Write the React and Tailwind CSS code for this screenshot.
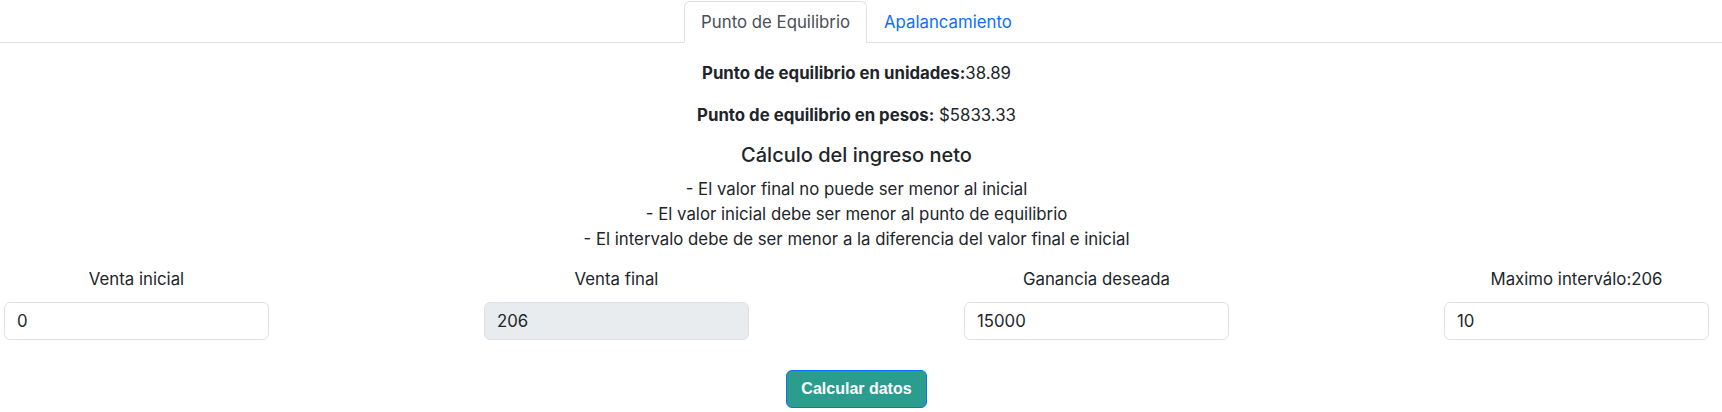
import { useState } from "react";

const bullets = [
  "- El valor final no puede ser menor al inicial",
  "- El valor inicial debe ser menor al punto de equilibrio",
  "- El intervalo debe de ser menor a la diferencia del valor final e inicial",
];

function Field({ label, value, onChange, disabled }) {
  return (
    <div className="flex w-[265px] flex-col items-center">
      <label className="mb-[11px] text-[16.8px] leading-6">{label}</label>
      <input
        type="text"
        value={value}
        disabled={disabled}
        onChange={(e) => onChange && onChange(e.target.value)}
        className={`h-[38px] w-full rounded-[6px] border border-[#dee2e6] px-3 text-[16.8px] text-[#212529] outline-none ${
          disabled ? "bg-[#e9ecef]" : "bg-white"
        }`}
      />
    </div>
  );
}

export default function App() {
  const [tab, setTab] = useState("equilibrio");
  const [inicial, setInicial] = useState("0");
  const [ganancia, setGanancia] = useState("15000");
  const [intervalo, setIntervalo] = useState("10");

  return (
    <div className="min-h-[412px] bg-white font-['Inter','Noto_Sans',sans-serif] text-[#212529]">
      {/* Tabs */}
      <div className="flex justify-center border-b border-[#dee2e6] pr-[9px] pt-px">
        <button
          onClick={() => setTab("equilibrio")}
          className="-mb-px rounded-t-[6px] border border-[#dee2e6] border-b-white bg-white px-4 py-2 text-[16.8px] leading-6 text-[#495057]"
        >
          Punto de Equilibrio
        </button>
        <button
          onClick={() => setTab("apalancamiento")}
          className="-mb-px border border-transparent px-4 py-2 text-[16.8px] leading-6 text-[#0d6efd]"
        >
          Apalancamiento
        </button>
      </div>

      {/* Content */}
      <div className="flex flex-col items-center pr-[9px] pt-[18px]">
        <p className="mb-[18px] text-[16.8px] leading-6">
          <span className="font-bold">Punto de equilibrio en unidades:</span>38.89
        </p>
        <p className="mb-[16px] text-[16.8px] leading-6">
          <span className="font-bold">Punto de equilibrio en pesos:</span> $5833.33
        </p>
        <h5 className="mb-[10px] text-xl font-medium leading-6">Cálculo del ingreso neto</h5>
        {bullets.map((b) => (
          <div key={b} className="text-[16.8px] leading-[25px]">
            {b}
          </div>
        ))}
      </div>

      <div className="flex justify-between pl-[4px] pr-[13px] pt-[15px]">
        <Field label="Venta inicial" value={inicial} onChange={setInicial} />
        <Field label="Venta final" value="206" disabled />
        <Field label="Ganancia deseada" value={ganancia} onChange={setGanancia} />
        <Field label="Maximo interválo:206" value={intervalo} onChange={setIntervalo} />
      </div>

      <div className="flex justify-center pr-[9px] pt-[30px]">
        <button className="h-[38px] rounded-[6px] border border-[#0d6efd] bg-[#2a9d8f] px-[14px] font-['Liberation_Sans',Arial,sans-serif] text-base font-bold text-white">
          Calcular datos
        </button>
      </div>
    </div>
  );
}
